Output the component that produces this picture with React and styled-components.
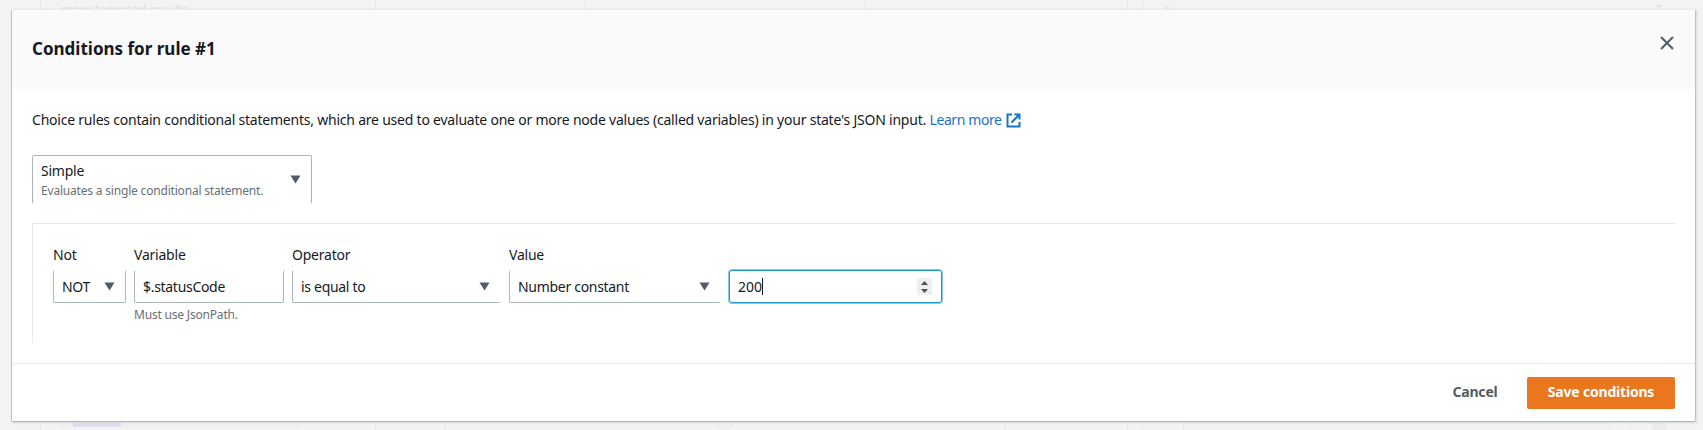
import React from 'react';
import styled, { createGlobalStyle } from 'styled-components';

const GlobalStyle = createGlobalStyle`
  * { box-sizing: border-box; }
  body {
    margin: 0;
    background: #f2f4f3;
    color: #16191f;
    font: 400 14px/22px "Noto Sans", "Open Sans", sans-serif;
    letter-spacing: -0.22px;
    overflow: hidden;
  }
`;

const Page = styled.div`
  position: relative;
  height: 430px;
  padding: 10px 7px 8px 12px;
  overflow: hidden;
`;

const Backdrop = styled.svg`
  position: absolute;
  inset: 0;
`;

const GhostText = styled.span`
  position: absolute;
  left: 60px;
  top: -1px;
  color: #dfe2e2;
  letter-spacing: -0.73px;
`;

const Dialog = styled.section`
  position: relative;
  display: flex;
  flex-direction: column;
  width: 1683px;
  height: 411px;
  background: #fff;
  box-shadow: 0 -1px 0 #e4e9e9, -1px 0 0 #b9c3c3, 1px 0 0 #b9c3c3, 0 1px 0 #aab7b8, 1px 1px 2px 1px #d3d9da;
`;

const Header = styled.header`
  display: flex;
  justify-content: space-between;
  height: 79px;
  padding: 25px 21px 0 20px;
  border-top: 1px solid #fff;
  background: #fafafa;
`;

const Title = styled.h2`
  margin: 0;
  font-size: 17px;
  line-height: 25px;
  letter-spacing: 0;
`;

const IconButton = styled.button`
  display: flex;
  align-self: flex-start;
  padding: 0;
  border: 0;
  background: none;
`;

const Body = styled.div`
  display: flex;
  flex-direction: column;
  align-items: flex-start;
  height: 274px;
  padding: 20px 20px 0;
`;

const Description = styled.p`
  margin: 0 0 24px;
  white-space: nowrap;
`;

const Link = styled.a`
  display: inline-flex;
  align-items: center;
  gap: 4px;
  color: #1b73c4;
  letter-spacing: -0.4px;
`;

const Box = styled.div`
  display: flex;
  align-items: center;
  justify-content: space-between;
  width: ${(p) => p.$width}px;
  height: ${(p) => p.$height || 33}px;
  padding: 0 10px 0 8px;
  border: 1px solid #aab7b8;
  border-radius: 2px;
`;

const ModeSelect = styled(Box)`
  border-bottom: 0;
  border-radius: 2px 2px 0 0;
`;

const Control = styled(Box)`
  border-top-color: transparent;
  border-right-color: ${(p) => (p.$openRight ? 'transparent' : '#aab7b8')};
  letter-spacing: -0.3px;
`;

const NumberInput = styled(Box)`
  padding-right: 9px;
  border: 1px solid #1d9ac9;
  border-radius: 3px;
  box-shadow: 0 0 0 1px #86c9e2;
  letter-spacing: 0;
`;

const Small = styled.span`
  display: block;
  color: #687078;
  font-size: 12px;
  line-height: 16px;
  letter-spacing: -0.19px;
`;

const OptionText = styled.div`
  display: flex;
  flex-direction: column;
  gap: 1px;
  padding-bottom: 1px;
`;

const RulePanel = styled.div`
  display: flex;
  gap: 8px;
  width: 1643px;
  height: 120px;
  margin-top: 20px;
  padding: 20px 0 0 20px;
  border-top: 1px solid #e6eaea;
  border-left: 1px solid #e6eaea;
`;

const Field = styled.div`
  display: flex;
  flex-direction: column;
`;

const Label = styled.label`
  height: 22px;
  margin-bottom: 4px;
`;

const Hint = styled(Small)`
  margin-top: 4px;
`;

const Value = styled.span`
  display: flex;
  align-items: center;
`;

const Caret = styled.i`
  width: 1px;
  height: 17px;
  background: #16191f;
`;

const Spinner = styled.span`
  display: flex;
  padding: 3px 4px 2px;
  background: #efefef;
`;

const Footer = styled.footer`
  display: flex;
  align-items: flex-start;
  justify-content: flex-end;
  gap: 9px;
  height: 58px;
  padding: 13px 20px 0;
  border-top: 1px solid #e6eaea;
`;

const Button = styled.button`
  height: 32px;
  padding: 0 0 3px;
  width: ${(p) => (p.$primary ? 148 : 86)}px;
  border: 0;
  border-radius: 2px;
  background: ${(p) => (p.$primary ? '#ea761d' : 'transparent')};
  color: ${(p) => (p.$primary ? '#fff' : '#545b64')};
  font: inherit;
  font-weight: 700;
  letter-spacing: -0.2px;
`;

const Arrow = () => (
  <svg width="11" height="9" viewBox="0 0 11 9">
    <path d="M0.5 0.5h10L5.5 8.5z" fill="#545b64" />
  </svg>
);

const Select = ({ text, ...box }) => (
  <Control {...box}>
    {text}
    <Arrow />
  </Control>
);

export default function App() {
  return (
    <Page>
      <GlobalStyle />
      <Backdrop width="1703" height="430" stroke="#e6e9e9" fill="none">
        <path d="M40.5 0V9M375.5 0V9M585.5 0V9M865.5 0V9M1127.5 0V9M1142.5 0V9M40.5 422V430M375.5 422V430M445.5 422V430M1005.5 422V430M1127.5 422V430M1142.5 422V430M1183.5 430V423H1609.5V430M1630.5 422V430M60.5 422V426H299.5V422" />
        <path d="M73 422h48v5H73z" fill="#e2dfec" stroke="none" />
        <path d="M1652 422h14v8h-14z" fill="#eaecec" stroke="none" />
        <path d="M1656 7l3-3 3 3zM1165 7h4v2h-4z" fill="#dfe2e2" stroke="none" />
        <circle cx="725.5" cy="421" r="8" fill="#f1f1eb" strokeDasharray="2 1" />
      </Backdrop>
      <GhostText>more targeted results</GhostText>
      <Dialog>
        <Header>
          <Title>Conditions for rule #1</Title>
          <IconButton aria-label="Close">
            <svg width="14" height="14" viewBox="0 0 14 14" stroke="#545b64" strokeWidth="2">
              <path d="M1 1l12 12M13 1L1 13" />
            </svg>
          </IconButton>
        </Header>
        <Body>
          <Description>
            Choice rules contain conditional statements, which are used to evaluate one or more node values
            (called variables) in your state's JSON input.{' '}
            <Link>
              Learn more
              <svg width="15" height="15" viewBox="0 0 15 15" fill="none" stroke="currentColor" strokeWidth="2">
                <path d="M6 1.5H1.5v12h12V9M8.5 1.5h5v5M13.5 1.5L5.5 9.5" />
              </svg>
            </Link>
          </Description>
          <ModeSelect $width={280} $height={48}>
            <OptionText>
              Simple
              <Small>Evaluates a single conditional statement.</Small>
            </OptionText>
            <Arrow />
          </ModeSelect>
          <RulePanel>
            <Field>
              <Label>Not</Label>
              <Select $width={73} text="NOT" />
            </Field>
            <Field>
              <Label>Variable</Label>
              <Control $width={150}>$.statusCode</Control>
              <Hint>Must use JsonPath.</Hint>
            </Field>
            <Field>
              <Label>Operator</Label>
              <Select $width={209} $openRight text="is equal to" />
            </Field>
            <Field>
              <Label>Value</Label>
              <Select $width={212} $openRight text="Number constant" />
            </Field>
            <Field>
              <Label aria-hidden="true" />
              <NumberInput $width={213}>
                <Value>
                  200
                  <Caret />
                </Value>
                <Spinner>
                  <svg width="7" height="12" viewBox="0 0 7 12" fill="#505050">
                    <path d="M0 4L3.5 0L7 4zM0 8L3.5 12L7 8z" />
                  </svg>
                </Spinner>
              </NumberInput>
            </Field>
          </RulePanel>
        </Body>
        <Footer>
          <Button>Cancel</Button>
          <Button $primary>Save conditions</Button>
        </Footer>
      </Dialog>
    </Page>
  );
}
